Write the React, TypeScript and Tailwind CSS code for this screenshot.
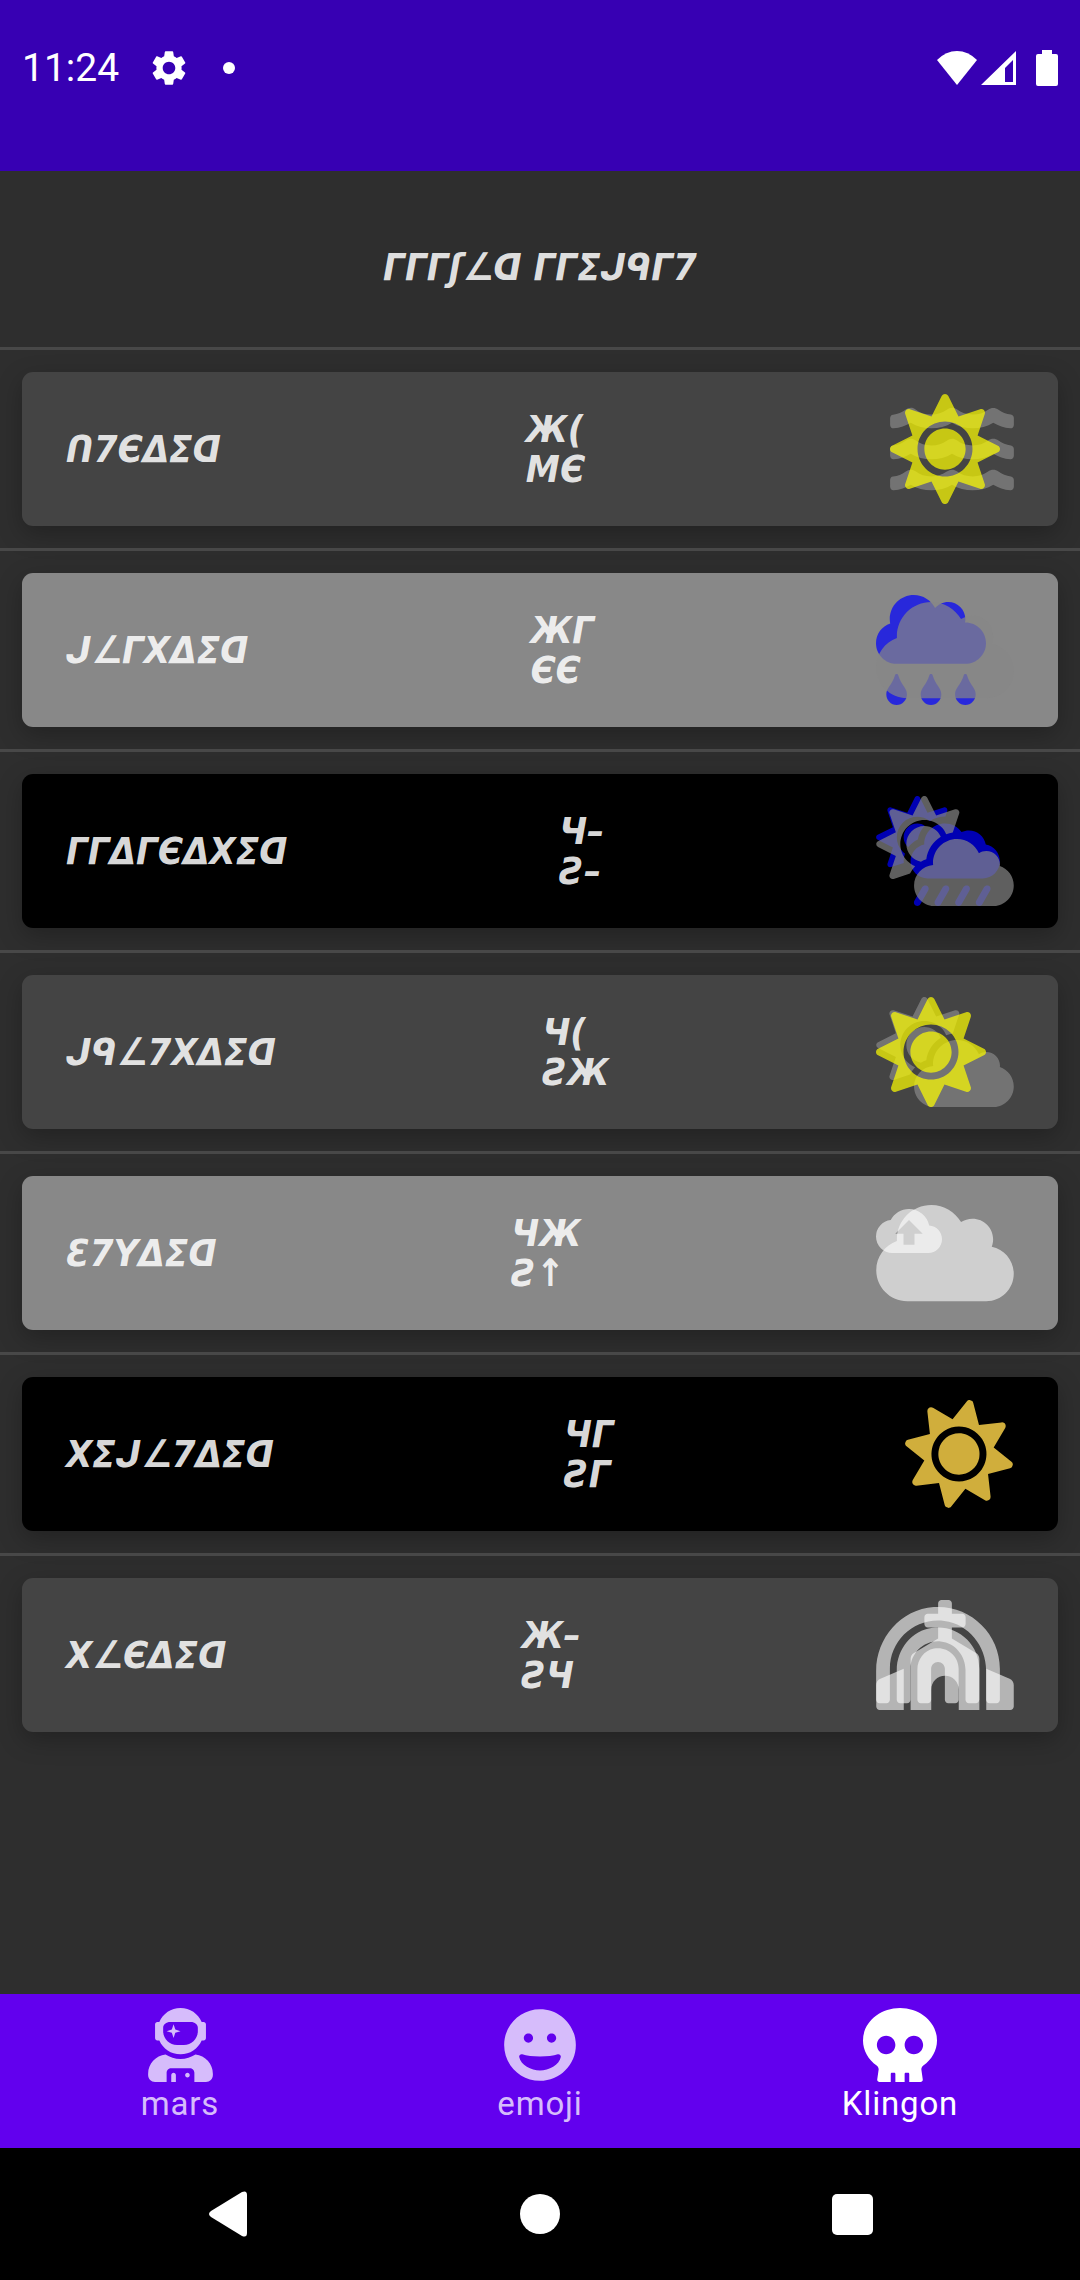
import React from "react";
import {
  FaChurch,
  FaCloud,
  FaCloudRain,
  FaCloudSun,
  FaCloudSunRain,
  FaGrin,
  FaRainbow,
  FaSkull,
  FaSun,
  FaUserAstronaut,
  FaWater,
} from "react-icons/fa";
import { MdBackup, MdSettings } from "react-icons/md";

// Angular characters that stand in for each letter and digit of the Klingon alphabet.
const KLINGON: Record<string, string> = {
  w: "Γ", W: "Γ", e: "Γ", k: "ʃ", l: "∠", y: "ᗡ", a: "Σ", t: "ᒍ", T: "ᒍ", h: "ᑫ", r: "7",
  M: "ᑎ", o: "7", n: "Є", d: "Δ", u: "∠", s: "X", S: "X", F: "Ɛ", i: "Y",
  "0": "–", "1": "(", "2": "Γ", "3": "Ч", "4": "Ж", "5": "Ƨ", "6": "Є", "8": "M", "9": "↑",
};

function toKlingon(text: string) {
  return Array.from(text, (c) => KLINGON[c] ?? c).join("");
}

const days = [
  {
    name: "Monday", low: "41", high: "86", card: "bg-[#444444]",
    icon: (
      <>
        <FaWater className="col-start-1 row-start-1 h-[110px] w-[124px] text-[#888888] opacity-70" />
        <FaSun className="col-start-1 row-start-1 size-[110px] text-[#ffff00] opacity-70" />
      </>
    ),
  },
  {
    name: "Tuesday", low: "42", high: "66", card: "bg-[#888888]",
    icon: (
      <>
        <FaCloudRain className="col-start-1 row-start-1 size-[110px] text-[#0000ff] opacity-70" />
        <FaCloud className="col-start-1 row-start-1 h-[110px] w-[138px] text-[#878787] opacity-70" />
      </>
    ),
  },
  {
    name: "Wedendsay", low: "30", high: "50", card: "bg-black",
    icon: (
      <>
        <FaCloudSunRain className="col-start-1 row-start-1 h-[110px] w-[124px] text-[#0000ff] opacity-70" />
        <FaCloudSun className="col-start-1 row-start-1 h-[110px] w-[138px] text-[#888888] opacity-70" />
      </>
    ),
  },
  {
    name: "Thursday", low: "31", high: "54", card: "bg-[#444444]",
    icon: (
      <>
        <FaCloudSun className="col-start-1 row-start-1 h-[110px] w-[138px] text-[#888888] opacity-70" />
        <FaSun className="col-start-1 row-start-1 size-[110px] text-[#ffff00] opacity-70" />
      </>
    ),
  },
  {
    name: "Friday", low: "34", high: "59", card: "bg-[#888888]",
    icon: (
      <>
        <FaCloud className="col-start-1 row-start-1 h-[110px] w-[138px] text-white opacity-60" />
        <MdBackup className="col-start-1 row-start-1 size-[66px] text-white opacity-60" />
      </>
    ),
  },
  {
    name: "Saturday", low: "32", high: "52", card: "bg-black",
    icon: <FaSun className="size-[110px] rotate-12 text-[#d0ae3c]" />,
  },
  {
    name: "Sunday", low: "40", high: "53", card: "bg-[#444444]",
    icon: (
      <>
        <FaRainbow className="col-start-1 row-start-1 h-[110px] w-[124px] text-white opacity-60" />
        <FaChurch className="col-start-1 row-start-1 h-[110px] w-[138px] text-white opacity-60" />
      </>
    ),
  },
];

function StatusBar() {
  return (
    <header className="flex h-[171px] items-start justify-between bg-[#3700b3] px-[22px] pt-[45px] text-white">
      <div className="flex h-[46px] items-center">
        <time className="w-[126px] text-[39px] leading-[46px]">11:24</time>
        <MdSettings className="size-[42px]" />
        <span className="ml-[33px] size-3 rounded-full bg-white" />
      </div>
      <div className="flex h-[46px] items-center">
        <svg viewBox="0 0 40 34" className="w-10" fill="currentColor" aria-label="Wi-Fi">
          <path d="M20 34 0 9Q9 0 20 0T40 9Z" />
        </svg>
        <svg viewBox="0 0 35 34" className="ml-1 w-[35px]" fill="currentColor" aria-label="Signal">
          <path fillRule="evenodd" d="M35 0V34H0ZM32 9 24 17V31H32Z" />
        </svg>
        <svg viewBox="0 0 22 36" className="ml-5 w-[22px]" fill="currentColor" aria-label="Battery">
          <path d="M6 0H16V4H20Q22 4 22 6V34Q22 36 20 36H2Q0 36 0 34V6Q0 4 2 4H6Z" />
        </svg>
      </div>
    </header>
  );
}

function Tab({ icon, label, active = false }: { icon: React.ReactNode; label: string; active?: boolean }) {
  return (
    <button
      className={
        active
          ? "flex flex-1 flex-col items-center pt-[14px] text-white"
          : "flex flex-1 flex-col items-center pt-[14px] text-[#d6bcfb]"
      }
      aria-current={active ? "page" : undefined}
    >
      {icon}
      <span className="text-[33px] leading-[44px] tracking-wide">{label}</span>
    </button>
  );
}

export default function App() {
  return (
    <div className="flex min-h-screen flex-col bg-[#2e2e2e] font-['Roboto',sans-serif]">
      <StatusBar />
      <main className="flex-1 font-['DejaVu_Sans_Condensed','DejaVu_Sans',sans-serif] text-[38px] font-bold text-white/87 italic">
        <h1 className="flex h-[176px] items-center justify-center pt-4" aria-label="weekly weather">
          {toKlingon("weekly weather")}
        </h1>
        <ul>
          {days.map((day) => (
            <li key={day.name} className="border-t-[3px] border-[#484848] p-[22px]">
              <article
                className={`flex h-[154px] items-center justify-between rounded-[11px] px-[44px] shadow-[0_8px_24px_rgba(0,0,0,0.25)] ${day.card}`}
              >
                <h2 aria-label={day.name}>{toKlingon(day.name)}</h2>
                <p className="flex flex-col leading-10">
                  <span aria-label={day.low}>{toKlingon(day.low)}</span>
                  <span aria-label={day.high}>{toKlingon(day.high)}</span>
                </p>
                <div className="grid items-start justify-items-start">{day.icon}</div>
              </article>
            </li>
          ))}
        </ul>
      </main>
      <nav className="flex h-[154px] bg-[#6200ee]">
        <Tab icon={<FaUserAstronaut className="h-[74px] w-[65px]" />} label="mars" />
        <Tab icon={<FaGrin className="size-[74px]" />} label="emoji" />
        <Tab icon={<FaSkull className="size-[74px]" />} label="Klingon" active />
      </nav>
      <footer className="flex h-[132px] items-center bg-black px-[72px] text-white">
        <button className="flex flex-1 justify-center" aria-label="Back">
          <svg viewBox="0 0 38 46" className="w-[38px]" fill="currentColor">
            <path d="M2 20 33 1Q38-1 38 4V42Q38 47 33 45L2 26Q-2 23 2 20Z" />
          </svg>
        </button>
        <button className="flex flex-1 justify-center" aria-label="Home">
          <span className="size-10 rounded-full bg-white" />
        </button>
        <button className="flex flex-1 justify-center" aria-label="Recent apps">
          <span className="size-[41px] rounded-[5px] bg-white" />
        </button>
      </footer>
    </div>
  );
}
